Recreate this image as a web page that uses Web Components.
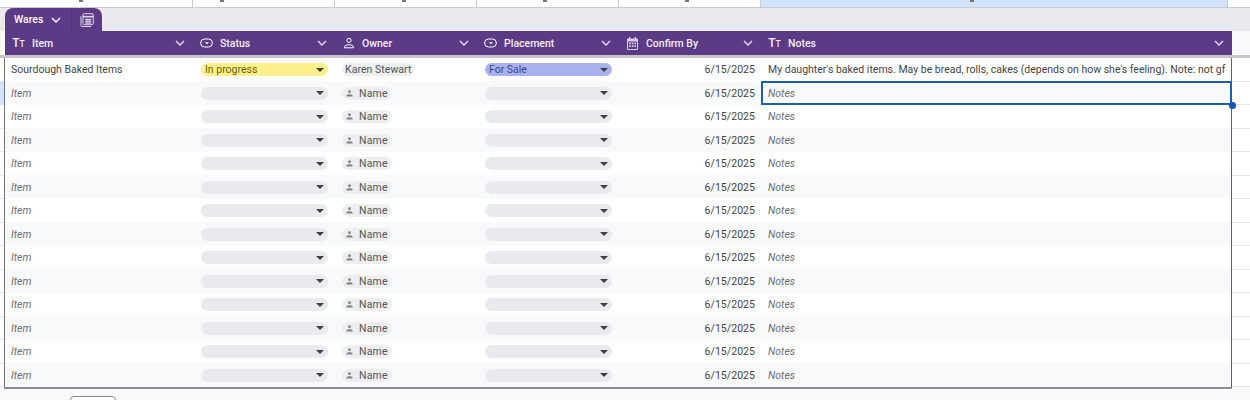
<!DOCTYPE html>
<html lang="en"><head><meta charset="utf-8"><title>Wares</title>
<style>
html,body{margin:0;height:400px;overflow:hidden;background:#f8f9fa;font-family:Roboto,"Liberation Sans",sans-serif}
</style></head><body>
<sheet-app></sheet-app>
<script>
const COLS='188px 142px 142px 142px 142px 471px';
const chev=c=>`<svg width="10" height="6" viewBox="0 0 10 6" fill="none" stroke="${c}" stroke-width="1.4"><path d="M1 1l4 4 4-4"/></svg>`;
const ICONS={
 pill:`<svg width="13" height="10" viewBox="0 0 13 10" fill="none" stroke="#fff" stroke-width="1"><rect x=".6" y="1" width="11.800" height="8" rx="4"/><path d="M5 4.200h4L7 6.200z" fill="#fff" stroke="none"/></svg>`,
 person:`<svg width="12" height="12" viewBox="0 0 12 12" fill="none" stroke="#fff" stroke-width="1"><circle cx="6" cy="3.400" r="2.100"/><path d="M1.600 10.800V9.700c0-1.300 2.400-1.900 4.400-1.900s4.400.6 4.400 1.900v1.100z"/></svg>`,
 cal:`<svg width="11" height="13" viewBox="0 0 11 13"><path fill="#d9cfe8" d="M2 0h1.300v1.500h4.400V0H9v1.500h1A1 1 0 0 1 11 2.500V12a1 1 0 0 1-1 1H1a1 1 0 0 1-1-1V2.500a1 1 0 0 1 1-1h1z"/><path fill="#5b3a86" d="M1 4.500h9v7.500H1z"/><path fill="#d9cfe8" d="M2 5.500h1.700v1.700H2zM4.700 5.500h1.700v1.700H4.700zM7.300 5.500H9v1.700H7.300zM2 8.300h1.700V10H2zM4.700 8.300h1.700V10H4.700zM7.300 8.300H9V10H7.300z"/></svg>`
};

class SheetTab extends HTMLElement{constructor(){super();this.attachShadow({mode:'open'}).innerHTML=`<style>
:host{display:flex;align-items:stretch;height:23px;width:97px;background:#5b3a86;border-radius:8px 8px 0 0;color:#fff;font:500 10.500px Roboto,sans-serif}
.n{display:flex;align-items:center;gap:8px;padding:0 0 0 9px;width:57px;border-right:1px solid #4e3276;box-sizing:content-box}
.i{flex:1;display:flex;align-items:center;justify-content:center}
</style><div class="n"><slot></slot>${chev('#fff')}</div><div class="i">
<svg width="14" height="14" viewBox="0 0 14 14" fill="none" stroke="#dcd4e8" stroke-width="1"><path d="M1 3v9.500a1 1 0 0 0 1 1h9"/><rect x="3" y=".7" width="10.300" height="11" rx="1.200"/><path d="M3 3.700h10.300" stroke-width="1.600"/><path d="M5 6.500h6.400M5 8.300h6.400M5 10h6.400" stroke-width="1.100"/><path d="M7.100 5.500v5.500M9.300 5.500v5.500" stroke-width=".8"/></svg></div>`}}
customElements.define('sheet-tab',SheetTab);

class ColHeader extends HTMLElement{constructor(){super();const t=this.getAttribute('icon');const ic=t==='text'?`<span class="tt"><b>T</b><i>T</i></span>`:ICONS[t];
this.attachShadow({mode:'open'}).innerHTML=`<style>
:host{display:flex;align-items:center;padding:0 8px 0 7px;color:#f3eff8;font:500 10.500px Roboto,sans-serif;min-width:0}
.ic{width:13px;display:flex;justify-content:center;margin-right:7px;flex:none}
.l{flex:1}
.tt{white-space:nowrap;display:flex;align-items:baseline}
.tt b{font-weight:500;font-size:12px}.tt i{font-style:normal;font-size:8.500px;font-weight:500}
</style><span class="ic">${ic}</span><span class="l"><slot></slot></span>${chev('#e6dff0')}`}}
customElements.define('col-header',ColHeader);

class DropChip extends HTMLElement{constructor(){super();this.attachShadow({mode:'open'}).innerHTML=`<style>
:host{display:flex;align-items:center;justify-content:space-between;height:13px;width:127px;border-radius:7px;background:var(--bg,#e8eaed);color:var(--fg,#444);padding:0 4px 0 4px;box-sizing:border-box;font:10.500px Roboto,sans-serif}
i{width:0;height:0;border:4px solid transparent;border-top:4px solid #3c4043;border-bottom:0}
</style><span><slot></slot></span><i></i>`}}
customElements.define('drop-chip',DropChip);

class PersonChip extends HTMLElement{constructor(){super();const e=this.hasAttribute('empty');this.attachShadow({mode:'open'}).innerHTML=`<style>
:host{display:inline-flex;align-items:center;height:13px;border-radius:7px;background:#eceef0;color:#555;padding:0 ${e?4.500:3}px 0 ${e?4:3}px;font:10.500px Roboto,sans-serif;letter-spacing:${e?.2:.05}px;gap:6px}
svg{flex:none}
</style>${e?`<svg width="7" height="7" viewBox="0 0 7 8" fill="#80868b"><circle cx="3.500" cy="2" r="1.600"/><path d="M0 7.500V6.300c0-1 2-1.500 3.500-1.500s3.500.5 3.500 1.500v1.200z"/></svg>`:''}<slot></slot>`}}
customElements.define('person-chip',PersonChip);

class TableRow extends HTMLElement{constructor(){super();this.attachShadow({mode:'open'}).innerHTML=`<style>
:host{display:grid;grid-template-columns:${COLS};height:23.500px;align-items:center;background:#fff;color:#444;font:10.500px Roboto,sans-serif}
:host(:nth-child(even)){background:#f8f9fa}
.c{padding:0 7px 0 6px;white-space:nowrap;overflow:hidden;min-width:0}
.d{text-align:right;padding-right:6px;letter-spacing:.05px}
.chip{display:flex;padding:0 0 0 8px;overflow:visible}
.pp{padding-left:7px;display:flex}
.n{padding:0 0 0 7px}
</style>
<div class="c"><slot name="item"></slot></div>
<div class="c chip"><slot name="status"></slot></div>
<div class="c pp"><slot name="owner"></slot></div>
<div class="c chip"><slot name="place"></slot></div>
<div class="c d"><slot name="date"></slot></div>
<div class="c n"><slot name="notes"></slot></div>`}}
customElements.define('table-row',TableRow);

class PhText extends HTMLElement{constructor(){super();this.attachShadow({mode:'open'}).innerHTML=`<style>:host{font-style:italic;color:#6a6e73}</style><slot></slot>`}}
customElements.define('ph-text',PhText);

class SheetApp extends HTMLElement{constructor(){super();
let rows=`<table-row>
<span slot="item">Sourdough Baked Items</span>
<drop-chip slot="status" style="--bg:#fdf08a;--fg:#6b5f10">In progress</drop-chip>
<person-chip slot="owner">Karen Stewart</person-chip>
<drop-chip slot="place" style="--bg:#aab2ee;--fg:#3d4590">For Sale</drop-chip>
<span slot="date">6/15/2025</span>
<span slot="notes">My daughter's baked items. May be bread, rolls, cakes (depends on how she's feeling). Note: not gf</span>
</table-row>`;
for(let i=0;i<13;i++)rows+=`<table-row>
<ph-text slot="item">Item</ph-text><drop-chip slot="status"></drop-chip>
<person-chip slot="owner" empty>Name</person-chip><drop-chip slot="place"></drop-chip>
<span slot="date">6/15/2025</span><ph-text slot="notes">Notes</ph-text></table-row>`;
this.attachShadow({mode:'open'}).innerHTML=`<style>
:host{display:block;width:1250px;height:400px;position:relative;overflow:hidden;background:#f8f9fa}
.strip{display:grid;grid-template-columns:193px 142px 142px 142px 142px 467px 1fr;height:7px;border-bottom:1px solid #c9ccd0;background:#fff}
.strip div{border-right:1px solid #c9ccd0;position:relative;overflow:hidden}
.strip div.blue{background:#d3e3fd}
.strip u{position:absolute;top:0;left:var(--x);width:4px;height:1.500px;background:#777}
.band{height:23px;background:#e8eaed;padding-left:5px}
.hdr{margin-left:5px;width:1227px;height:24px;display:grid;grid-template-columns:${COLS};background:#5b3a86}
.shadow{height:2.800px;background:#c6c4c9}
.area{display:grid;grid-template-columns:5px 1227px 1fr;height:329px;background:#fff;
 background-image:repeating-linear-gradient(to bottom,#fff 0,#fff 22.500px,#e3e5e8 22.500px,#e3e5e8 23.500px)}
.gut{background:linear-gradient(#fff 23.500px,#d3e3fd 23.500px,#d3e3fd 47px,transparent 47px)}
.tbl{position:relative;box-sizing:border-box;display:block;border-left:1px solid #70757a;border-right:1px solid #5f6368;margin-left:-1px;width:1228px}
.cur{position:absolute;left:756px;top:23.200px;width:471px;height:24px;box-sizing:border-box;border:2px solid #1a5fa8;pointer-events:none}
.dot{position:absolute;right:-6px;bottom:-6px;width:7px;height:7px;border-radius:50%;background:#1155b5}
.end{margin-left:4px;width:1228px;height:2px;background:#8a8d91}
.foot{padding:7.700px 0 0 70px}
.btn{display:block;width:46px;height:20px;box-sizing:border-box;border:1px solid #80868b;border-radius:4px;background:#fff}
</style>
<div class="strip"><div><u style="--x:79px"></u></div><div><u style="--x:27px"></u></div><div><u style="--x:67px"></u></div><div><u style="--x:66px"></u></div><div><u style="--x:66px"></u></div><div class="blue"><u style="--x:209px"></u></div><div style="border:0"></div></div>
<div class="band"><sheet-tab>Wares</sheet-tab></div>
<div class="hdr">
<col-header icon="text">Item</col-header><col-header icon="pill">Status</col-header><col-header icon="person">Owner</col-header><col-header icon="pill">Placement</col-header><col-header icon="cal">Confirm By</col-header><col-header icon="text">Notes</col-header>
</div>
<div class="shadow"></div>
<div class="area"><div class="gut"></div><div class="tbl">${rows}<div class="cur"><div class="dot"></div></div></div><div></div></div>
<div class="end"></div>
<div class="foot"><div class="btn"></div></div>`}}
customElements.define('sheet-app',SheetApp);
</script></body></html>
